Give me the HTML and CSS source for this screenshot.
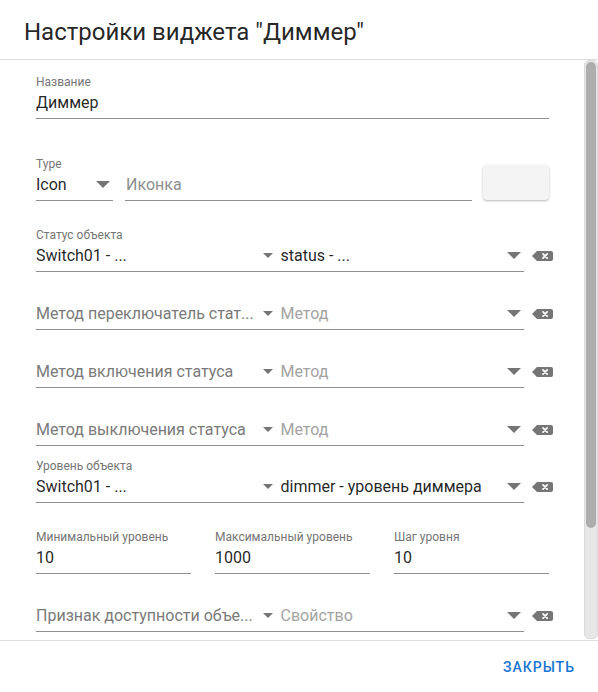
FILE: index.html
```html
<!DOCTYPE html>
<html lang="ru">
<head>
<meta charset="utf-8">
<title>Настройки виджета</title>
<link rel="stylesheet" href="styles.css">
</head>
<body>
<div class="dialog">
  <header class="dialog-title">Настройки виджета "Диммер"</header>
  <div class="dialog-body">
  <main class="dialog-content">
    <div class="field f-name">
      <div class="label">Название</div>
      <div class="input"><span class="value">Диммер</span></div>
    </div>

    <div class="type-row">
      <div class="field f-type">
        <div class="label">Type</div>
        <div class="input"><span class="value">Icon</span>
          <svg class="arrow-big" width="14" height="7" viewBox="0 0 14 7"><path d="M0 0h14L7 7z"/></svg>
        </div>
      </div>
      <div class="field f-icon">
        <div class="label"></div>
        <div class="input"><span class="ph">Иконка</span></div>
      </div>
      <button class="icon-btn" type="button"></button>
    </div>

    <div class="sel-row r-status">
      <div class="field pair">
        <div class="label">Статус объекта</div>
        <div class="input pair-in">
          <div class="half"><span class="value">Switch01 - ...</span>
            <svg class="arrow-small" width="10" height="5" viewBox="0 0 10 5"><path d="M0 0h10L5 5z"/></svg></div>
          <div class="half"><span class="value">status - ...</span>
            <svg class="arrow-big" width="14" height="7" viewBox="0 0 14 7"><path d="M0 0h14L7 7z"/></svg></div>
        </div>
      </div>
      <svg class="clear" width="21" height="10" viewBox="0 0 21 10"><path class="cb" d="M0 5L5 0H19a2 2 0 0 1 2 2V8a2 2 0 0 1-2 2H5z"/><path class="cx" d="M11 2.8l4.2 4.4M15.2 2.8L11 7.2"/></svg>
    </div>

    <div class="sel-row r-gap">
      <div class="field pair">
        <div class="label"></div>
        <div class="input pair-in">
          <div class="half"><span class="ph-dark">Метод переключатель стат...</span>
            <svg class="arrow-small" width="10" height="5" viewBox="0 0 10 5"><path d="M0 0h10L5 5z"/></svg></div>
          <div class="half"><span class="ph">Метод</span>
            <svg class="arrow-big" width="14" height="7" viewBox="0 0 14 7"><path d="M0 0h14L7 7z"/></svg></div>
        </div>
      </div>
      <svg class="clear" width="21" height="10" viewBox="0 0 21 10"><path class="cb" d="M0 5L5 0H19a2 2 0 0 1 2 2V8a2 2 0 0 1-2 2H5z"/><path class="cx" d="M11 2.8l4.2 4.4M15.2 2.8L11 7.2"/></svg>
    </div>

    <div class="sel-row r-gap">
      <div class="field pair">
        <div class="label"></div>
        <div class="input pair-in">
          <div class="half"><span class="ph-dark">Метод включения статуса</span>
            <svg class="arrow-small" width="10" height="5" viewBox="0 0 10 5"><path d="M0 0h10L5 5z"/></svg></div>
          <div class="half"><span class="ph">Метод</span>
            <svg class="arrow-big" width="14" height="7" viewBox="0 0 14 7"><path d="M0 0h14L7 7z"/></svg></div>
        </div>
      </div>
      <svg class="clear" width="21" height="10" viewBox="0 0 21 10"><path class="cb" d="M0 5L5 0H19a2 2 0 0 1 2 2V8a2 2 0 0 1-2 2H5z"/><path class="cx" d="M11 2.8l4.2 4.4M15.2 2.8L11 7.2"/></svg>
    </div>

    <div class="sel-row r-gap">
      <div class="field pair">
        <div class="label"></div>
        <div class="input pair-in">
          <div class="half"><span class="ph-dark">Метод выключения статуса</span>
            <svg class="arrow-small" width="10" height="5" viewBox="0 0 10 5"><path d="M0 0h10L5 5z"/></svg></div>
          <div class="half"><span class="ph">Метод</span>
            <svg class="arrow-big" width="14" height="7" viewBox="0 0 14 7"><path d="M0 0h14L7 7z"/></svg></div>
        </div>
      </div>
      <svg class="clear" width="21" height="10" viewBox="0 0 21 10"><path class="cb" d="M0 5L5 0H19a2 2 0 0 1 2 2V8a2 2 0 0 1-2 2H5z"/><path class="cx" d="M11 2.8l4.2 4.4M15.2 2.8L11 7.2"/></svg>
    </div>

    <div class="sel-row r-level">
      <div class="field pair">
        <div class="label">Уровень объекта</div>
        <div class="input pair-in">
          <div class="half"><span class="value">Switch01 - ...</span>
            <svg class="arrow-small" width="10" height="5" viewBox="0 0 10 5"><path d="M0 0h10L5 5z"/></svg></div>
          <div class="half"><span class="value">dimmer - уровень диммера</span>
            <svg class="arrow-big" width="14" height="7" viewBox="0 0 14 7"><path d="M0 0h14L7 7z"/></svg></div>
        </div>
      </div>
      <svg class="clear" width="21" height="10" viewBox="0 0 21 10"><path class="cb" d="M0 5L5 0H19a2 2 0 0 1 2 2V8a2 2 0 0 1-2 2H5z"/><path class="cx" d="M11 2.8l4.2 4.4M15.2 2.8L11 7.2"/></svg>
    </div>

    <div class="three-row">
      <div class="field">
        <div class="label">Минимальный уровень</div>
        <div class="input"><span class="value">10</span></div>
      </div>
      <div class="field">
        <div class="label">Максимальный уровень</div>
        <div class="input"><span class="value">1000</span></div>
      </div>
      <div class="field">
        <div class="label">Шаг уровня</div>
        <div class="input"><span class="value">10</span></div>
      </div>
    </div>

    <div class="sel-row r-gap">
      <div class="field pair">
        <div class="label"></div>
        <div class="input pair-in">
          <div class="half"><span class="ph-dark">Признак доступности объе...</span>
            <svg class="arrow-small" width="10" height="5" viewBox="0 0 10 5"><path d="M0 0h10L5 5z"/></svg></div>
          <div class="half"><span class="ph">Свойство</span>
            <svg class="arrow-big" width="14" height="7" viewBox="0 0 14 7"><path d="M0 0h14L7 7z"/></svg></div>
        </div>
      </div>
      <svg class="clear" width="21" height="10" viewBox="0 0 21 10"><path class="cb" d="M0 5L5 0H19a2 2 0 0 1 2 2V8a2 2 0 0 1-2 2H5z"/><path class="cx" d="M11 2.8l4.2 4.4M15.2 2.8L11 7.2"/></svg>
    </div>
  </main>
  <div class="scrollbar"><div class="thumb"></div></div>
  </div>
  <footer class="dialog-actions">
    <button class="text-btn" type="button">Закрыть</button>
  </footer>
</div>
</body>
</html>
```
FILE: styles.css
```css
* { box-sizing: border-box; }
html, body { margin: 0; padding: 0; }
body {
  width: 598px;
  height: 692px;
  overflow: hidden;
  background: #fff;
  font-family: Roboto, "Liberation Sans", sans-serif;
  color: rgba(0,0,0,0.87);
}
.dialog {
  display: flex;
  flex-direction: column;
  height: 692px;
  background: #fff;
}
.dialog-title {
  height: 60px;
  padding: 18px 24px 0;
  font-size: 24px;
  line-height: 28px;
  font-weight: 400;
  color: rgba(0,0,0,0.87);
  border-bottom: 1px solid #dedede;
  flex: none;
}
.dialog-body {
  height: 580px;
  flex: none;
  display: flex;
}
.dialog-content {
  flex: 1;
  min-width: 0;
  overflow: hidden;
  padding: 11px 35px 0 36px;
}
.scrollbar {
  flex: none;
  width: 14px;
  height: 579px;
  background: #e7e7e7;
  border: 1px solid #dadada;
  border-radius: 5px;
  padding: 1px 1px 0 1px;
}
.thumb {
  height: 466px;
  background: #adadad;
  border-radius: 5px;
}

.field { display: flex; flex-direction: column; height: 48px; min-width: 0; }
.label {
  height: 16px;
  font-size: 12px;
  line-height: 22px;
  color: #757575;
  white-space: nowrap;
}
.input {
  height: 32px;
  display: flex;
  align-items: center;
  border-bottom: 1px solid #8f8f8f;
  font-size: 16px;
  line-height: 19px;
  padding: 6px 0 7px;
  min-width: 0;
}
.value { color: rgba(0,0,0,0.87); white-space: nowrap; overflow: hidden; text-overflow: ellipsis; flex: 1; min-width: 0; }
.ph { color: #a3a3a3; white-space: nowrap; overflow: hidden; text-overflow: ellipsis; flex: 1; min-width: 0; }
.ph-dark { color: #7a7a7a; white-space: nowrap; overflow: hidden; text-overflow: ellipsis; flex: 1; min-width: 0; }
.f-icon .ph { color: #8e8e8e; }

.arrow-big, .arrow-small { flex: none; fill: #757575; }
.arrow-big { margin: 0 3px 0 4px; }
.arrow-small { margin: 0 7px 0 4px; }

.type-row {
  display: flex;
  align-items: flex-end;
  margin-top: 34px;
}
.f-type { width: 77px; flex: none; }
.f-icon { flex: 1; margin-left: 12px; }
.f-icon .input { padding-left: 1px; }
.icon-btn {
  flex: none;
  width: 66px;
  height: 35px;
  margin: 0 0 1px 11px;
  border: none;
  border-radius: 4px;
  background: #f4f4f4;
  box-shadow: 0 1px 3px rgba(0,0,0,0.22), 0 1px 1px rgba(0,0,0,0.08);
}

.sel-row { display: flex; align-items: flex-end; width: 517px; }
.r-status { margin-top: 23px; }
.r-gap { margin-top: 10px; }
.r-level { margin-top: 9px; }
.pair { width: 488px; flex: none; }
.pair-in { padding-top: 6px; }
.half { flex: 1; display: flex; align-items: center; min-width: 0; width: 244px; }
.half + .half { padding-left: 1px; }
.clear { flex: none; margin: 0 0 11px 8px; }
.clear .cb { fill: #757575; }
.clear .cx { stroke: #fff; stroke-width: 1.7; fill: none; stroke-linecap: round; }

.three-row {
  display: grid;
  grid-template-columns: repeat(3, 155px);
  column-gap: 24px;
  margin-top: 23px;
}

.dialog-actions {
  flex: none;
  height: 52px;
  border-top: 1px solid #dedede;
  display: flex;
  align-items: center;
  justify-content: flex-end;
  padding: 0 15px 0 0;
}
.text-btn {
  font-family: Roboto, "Liberation Sans", sans-serif;
  font-size: 14px;
  font-weight: 500;
  letter-spacing: 1px;
  text-transform: uppercase;
  color: #1976d2;
  background: none;
  border: none;
  padding: 6px 8px;
  line-height: 24px;
}
```
